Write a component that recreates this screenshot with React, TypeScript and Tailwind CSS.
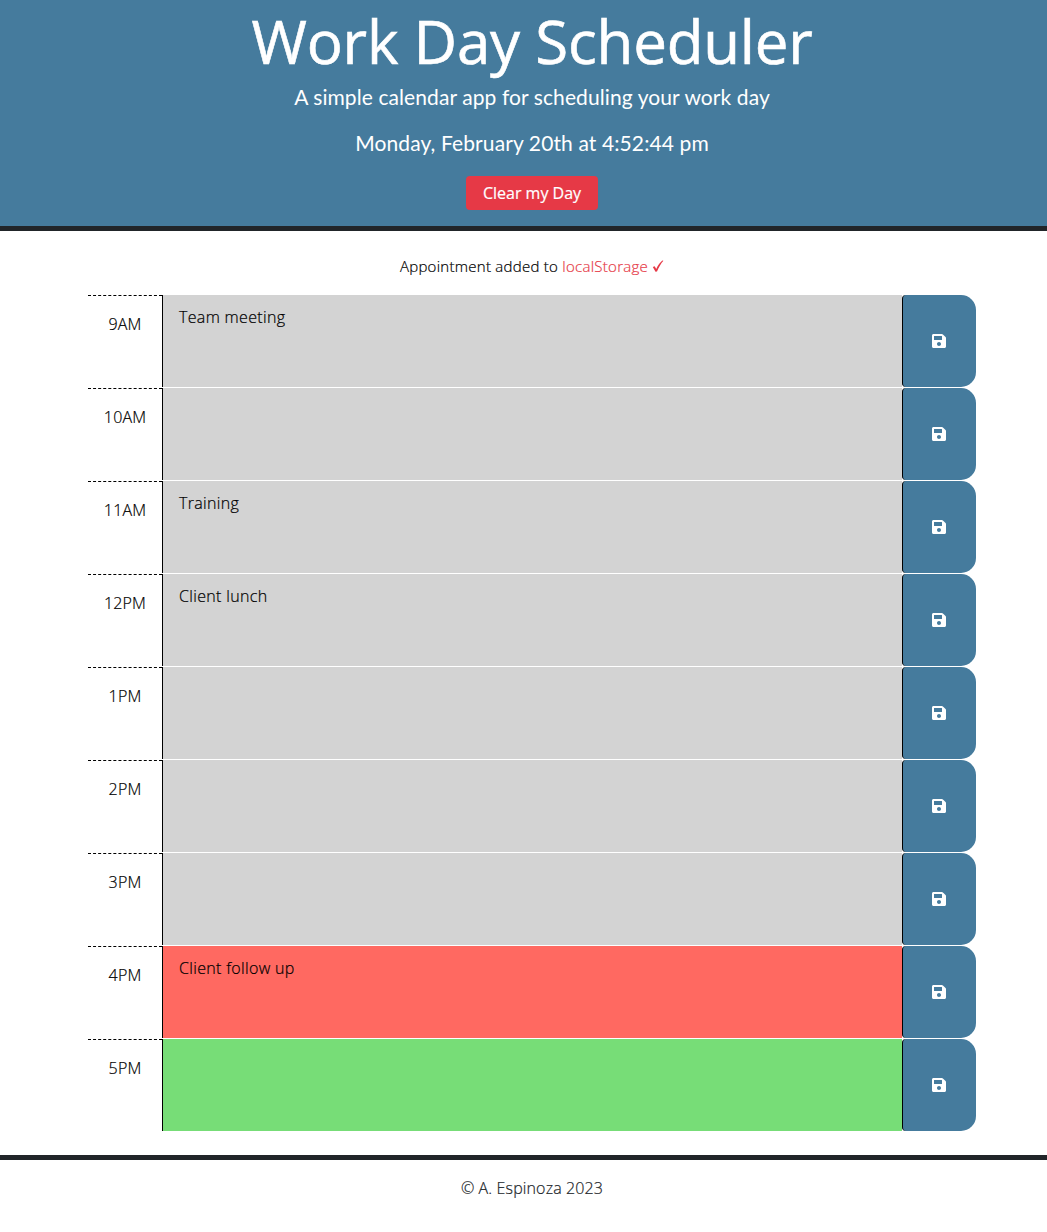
type Slot = { hour: string; text: string; tone: string };

const past = "bg-[#d3d3d3]";

const slots: Slot[] = [
  { hour: "9AM", text: "Team meeting", tone: past },
  { hour: "10AM", text: "", tone: past },
  { hour: "11AM", text: "Training", tone: past },
  { hour: "12PM", text: "Client lunch", tone: past },
  { hour: "1PM", text: "", tone: past },
  { hour: "2PM", text: "", tone: past },
  { hour: "3PM", text: "", tone: past },
  { hour: "4PM", text: "Client follow up", tone: "bg-[#ff6961]" },
  { hour: "5PM", text: "", tone: "bg-[#77dd77]" },
];

function SaveIcon() {
  return (
    <svg viewBox="0 0 448 512" className="h-4 w-[14px]" fill="currentColor" aria-hidden="true">
      <path d="M433.941 129.941l-83.882-83.882A48 48 0 0 0 316.118 32H48C21.49 32 0 53.49 0 80v352c0 26.51 21.49 48 48 48h352c26.51 0 48-21.49 48-48V163.882a48 48 0 0 0-14.059-33.941zM224 416c-35.346 0-64-28.654-64-64 0-35.346 28.654-64 64-64s64 28.654 64 64c0 35.346-28.654 64-64 64zm96-304.52V212c0 6.627-5.373 12-12 12H76c-6.627 0-12-5.373-12-12V108c0-6.627 5.373-12 12-12h228.52c3.183 0 6.235 1.264 8.485 3.515l3.48 3.48A11.996 11.996 0 0 1 320 111.48z" />
    </svg>
  );
}

function Row({ hour, text, tone }: Slot) {
  return (
    <div className="flex h-[92px]">
      <div className="w-[74px] border-t border-dashed border-black pt-4 text-center leading-6 tracking-[0.15px]">{hour}</div>
      <div className={`w-[740px] border-l border-black pt-[10px] pl-4 leading-6 tracking-[0.33px] ${tone}`}>{text}</div>
      <button
        aria-label={`Save ${hour}`}
        className="flex w-[74px] items-center justify-center rounded-l-[4px] rounded-r-[15px] border-l border-black bg-[#457b9d] pr-0.5 text-white"
      >
        <SaveIcon />
      </button>
    </div>
  );
}

export default function App() {
  return (
    <div className="w-full overflow-hidden">
      <div className="h-[1232px] w-[1064px] bg-white font-['Open_Sans',sans-serif] text-base font-light text-black [-webkit-text-stroke:0.2px]">
        <header className="flex h-[231px] flex-col items-center border-b-[5px] border-[#212529] bg-[#457b9d] text-white">
          <h1 className="mt-[5px] h-[72px] text-[60px] leading-[72px] font-normal tracking-[-0.2px] whitespace-nowrap [-webkit-text-stroke:0.6px]">
            Work Day Scheduler
          </h1>
          <p className="mt-[5px] h-[30px] font-['Lato',sans-serif] text-[21px] leading-[30px] font-normal tracking-[0.09px] whitespace-nowrap [-webkit-text-stroke:0]">
            A simple calendar app for scheduling your work day
          </p>
          <p className="mt-4 h-[30px] font-['Lato',sans-serif] text-[21px] leading-[30px] font-normal tracking-[0.11px] whitespace-nowrap [-webkit-text-stroke:0]">
            Monday, February 20th at 4:52:44 pm
          </p>
          <button className="mt-[18px] h-[34px] w-[132px] rounded-[4px] bg-[#e63946] text-base leading-[34px] font-normal">
            Clear my Day
          </button>
        </header>
        <main className="mx-auto w-[888px]">
          <p className="mt-[23px] mb-[17px] flex h-6 items-center justify-center gap-1 text-[15px] leading-6 tracking-[0.27px]">
            <span>
              Appointment added to <span className="text-[#e63946]">localStorage</span>
            </span>
            <svg viewBox="0 0 12 12" className="h-3 w-3 text-[#e63946]" fill="currentColor" aria-hidden="true">
              <path d="M.8 7.1 2.7 6.2 4.2 8.9C6 5.4 8 2.6 10.3.6L11.4.8C8.8 3.7 6.8 7.4 5 11.6L3.5 11.8Z" />
            </svg>
          </p>
          <div className="flex flex-col gap-px">
            {slots.map((s) => (
              <Row key={s.hour} {...s} />
            ))}
          </div>
        </main>
        <footer className="mt-6 border-t-[5px] border-[#212529] pt-4 text-center leading-6 tracking-[0.13px] text-[#212529]">
          © A. Espinoza 2023
        </footer>
      </div>
    </div>
  );
}
